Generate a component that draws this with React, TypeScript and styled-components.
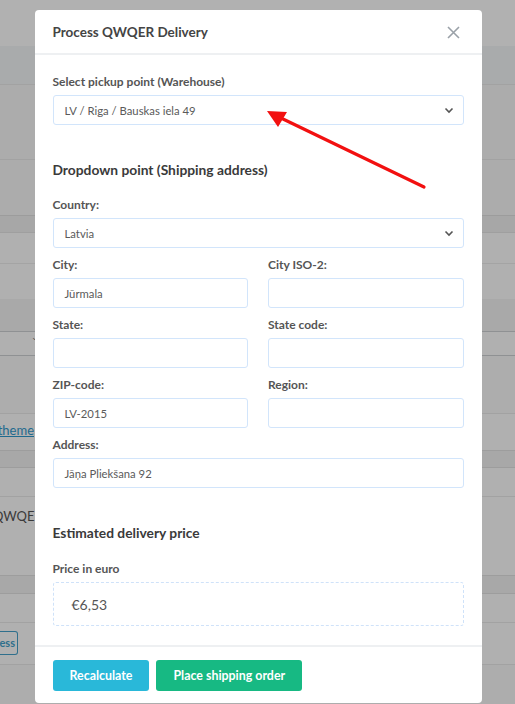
import styled, { createGlobalStyle } from "styled-components";

const GlobalStyle = createGlobalStyle`
  html, body {
    margin: 0;
    padding: 0;
    height: 100%;
    overflow: hidden;
    background: #b0b0b0;
    font-family: "Lato", "Open Sans", sans-serif;
  }
  * {
    box-sizing: border-box;
  }
`;

type BgRow = {
  h: number;
  bg: string;
  line?: string;
  kind?: "link" | "text" | "button" | "caret";
};

const rows: BgRow[] = [
  { h: 46, bg: "#b1b1b1" },
  { h: 38, bg: "#a9abac" },
  { h: 75, bg: "#acacac", line: "#a2a2a2" },
  { h: 56, bg: "#acacac", line: "#a2a2a2" },
  { h: 17, bg: "#a7a7a7", line: "#9c9c9c" },
  { h: 31, bg: "#b0b0b0", line: "#9f9f9f" },
  { h: 36, bg: "#b0b0b0", line: "#a4a4a4" },
  { h: 32, bg: "#a9a9a9" },
  { h: 24, bg: "#b0b0b0", line: "#8f9193", kind: "caret" },
  { h: 58, bg: "#adadad", line: "#8f9193" },
  { h: 37, bg: "#b0b0b0", line: "#a2a2a2", kind: "link" },
  { h: 17, bg: "#a8a8a8", line: "#9d9d9d" },
  { h: 29, bg: "#b0b0b0", line: "#9d9d9d" },
  { h: 79, bg: "#b0b0b0", line: "#a2a2a2", kind: "text" },
  { h: 18, bg: "#a8a8a8", line: "#9d9d9d" },
  { h: 29, bg: "#b0b0b0", line: "#9d9d9d" },
  { h: 42, bg: "#b0b0b0", line: "#a2a2a2", kind: "button" },
  { h: 60, bg: "#adadad", line: "#a2a2a2" },
];

function App() {
  return (
    <Page>
      <GlobalStyle />
      <Backdrop>
        {rows.map((r, i) => (
          <Row key={i} $h={r.h} $bg={r.bg} $line={r.line}>
            {r.kind === "link" && <BgLink>Change theme</BgLink>}
            {r.kind === "text" && <BgText>QWQER c</BgText>}
            {r.kind === "button" && <BgButton>Address</BgButton>}
            {r.kind === "caret" && <BgCaret>⌄</BgCaret>}
          </Row>
        ))}
      </Backdrop>

      <Overlay>
        <Modal>
          <Header>
            <Title>Process QWQER Delivery</Title>
            <Close aria-label="Close">
              <svg width="13" height="13" viewBox="0 0 13 13">
                <path d="M1 1L12 12M12 1L1 12" stroke="#9aa1a8" strokeWidth="1.6" />
              </svg>
            </Close>
          </Header>

          <Body>
            <Field>
              <Label>Select pickup point (Warehouse)</Label>
              <Select>
                <span>LV / Riga / Bauskas iela 49</span>
                <Chevron />
              </Select>
            </Field>

            <Heading>Dropdown point (Shipping address)</Heading>

            <Field>
              <Label>Country:</Label>
              <Select>
                <span>Latvia</span>
                <Chevron />
              </Select>
            </Field>

            <Grid>
              <Field>
                <Label>City:</Label>
                <Input>Jūrmala</Input>
              </Field>
              <Field>
                <Label>City ISO-2:</Label>
                <Input />
              </Field>
              <Field>
                <Label>State:</Label>
                <Input />
              </Field>
              <Field>
                <Label>State code:</Label>
                <Input />
              </Field>
              <Field>
                <Label>ZIP-code:</Label>
                <Input>LV-2015</Input>
              </Field>
              <Field>
                <Label>Region:</Label>
                <Input />
              </Field>
            </Grid>

            <Field>
              <Label>Address:</Label>
              <Input>Jāņa Pliekšana 92</Input>
            </Field>

            <Heading $after={18}>Estimated delivery price</Heading>

            <Field>
              <Label>Price in euro</Label>
              <PriceBox>€6,53</PriceBox>
            </Field>
          </Body>

          <Footer>
            <Button $bg="#29b8d9">Recalculate</Button>
            <Button $bg="#17b983">Place shipping order</Button>
          </Footer>
        </Modal>
      </Overlay>

      <Pointer width="515" height="704" viewBox="0 0 515 704">
        <line x1="424" y1="187" x2="283" y2="119" stroke="#f21010" strokeWidth="3.2" strokeLinecap="round" />
        <polygon points="267,111 287,112 278,127" fill="#f21010" />
      </Pointer>
    </Page>
  );
}

function Chevron() {
  return (
    <svg width="10" height="7" viewBox="0 0 10 7">
      <path d="M1.5 1.5L5 5L8.5 1.5" fill="none" stroke="#555" strokeWidth="1.6" />
    </svg>
  );
}

const Page = styled.div`
  position: relative;
  width: 100vw;
  height: 100vh;
  overflow: hidden;
`;

const Backdrop = styled.div`
  display: flex;
  flex-direction: column;
`;

const Row = styled.div<{ $h: number; $bg: string; $line?: string }>`
  height: ${(p) => p.$h}px;
  background: ${(p) => p.$bg};
  border-top: ${(p) => (p.$line ? `1px solid ${p.$line}` : "none")};
  display: flex;
  align-items: center;
  overflow: hidden;
  font-size: 13px;
`;

const BgLink = styled.span`
  width: 34px;
  flex: none;
  overflow: hidden;
  white-space: nowrap;
  direction: rtl;
  color: #1f6a8e;
  text-decoration: underline;
  margin-top: -4px;
`;

const BgText = styled.span`
  width: 35px;
  flex: none;
  overflow: hidden;
  white-space: nowrap;
  text-indent: -7px;
  color: #3a3a3a;
  align-self: flex-start;
  margin-top: 11px;
`;

const BgButton = styled.span`
  width: 18px;
  flex: none;
  overflow: hidden;
  white-space: nowrap;
  direction: rtl;
  height: 24px;
  line-height: 22px;
  border: 1px solid #2f6f8c;
  border-left: none;
  border-radius: 0 3px 3px 0;
  color: #2f6f8c;
  font-size: 11px;
  font-weight: 700;
  padding-right: 2px;
  margin-top: -1px;
`;

const BgCaret = styled.span`
  margin-left: 31px;
  margin-top: -14px;
  color: #555;
  font-size: 9px;
`;

const Overlay = styled.div`
  position: absolute;
  inset: 0;
  display: flex;
  justify-content: center;
  padding-top: 10px;
`;

const Modal = styled.div`
  width: 447px;
  height: 693px;
  margin-left: 1px;
  background: #fff;
  border-radius: 4px;
  display: flex;
  flex-direction: column;
`;

const Header = styled.div`
  height: 45px;
  flex: none;
  display: flex;
  align-items: center;
  justify-content: space-between;
  padding: 0 22px 0 18px;
  border-bottom: 2px solid #eef0f2;
`;

const Title = styled.h4`
  margin: 0;
  font-size: 13.5px;
  font-weight: 700;
  color: #444;
  margin-top: 1px;
`;

const Close = styled.span`
  display: flex;
  margin-top: 1px;
`;

const Body = styled.div`
  padding: 19px 18px 19px;
  display: flex;
  flex-direction: column;
`;

const Field = styled.div`
  display: flex;
  flex-direction: column;
  margin-bottom: 9px;
`;

const Label = styled.label`
  font-size: 12px;
  line-height: 16px;
  font-weight: 700;
  color: #555;
  margin-bottom: 5px;
`;

const Control = styled.div`
  height: 30px;
  border: 1px solid #d2e5fb;
  border-radius: 3px;
  padding: 0 11px;
  display: flex;
  align-items: center;
  font-size: 11.3px;
  color: #5a5a5a;
`;

const Select = styled(Control)`
  justify-content: space-between;
  padding-right: 9px;
`;

const Input = styled(Control)``;

const Grid = styled.div`
  display: grid;
  grid-template-columns: 1fr 1fr;
  column-gap: 20px;
`;

const Heading = styled.h5<{ $after?: number }>`
  margin: 26px 0 ${(p) => p.$after ?? 17}px;
  font-size: 13.8px;
  line-height: 20px;
  font-weight: 700;
  color: #3a3a3a;
`;

const PriceBox = styled.div`
  height: 44px;
  border: 1px dashed #cfe2f9;
  border-radius: 3px;
  display: flex;
  align-items: center;
  padding-left: 18px;
  font-size: 14px;
  color: #555;
  margin-bottom: -9px;
`;

const Footer = styled.div`
  border-top: 2px solid #eef0f2;
  padding: 13px 18px;
  display: flex;
  gap: 7px;
`;

const Button = styled.button<{ $bg: string }>`
  height: 31px;
  padding: 0 17px;
  border: none;
  border-radius: 3px;
  background: ${(p) => p.$bg};
  color: #fff;
  font-family: inherit;
  font-size: 12.4px;
  font-weight: 700;
`;

const Pointer = styled.svg`
  position: absolute;
  left: 0;
  top: 0;
  pointer-events: none;
`;

export default App;
